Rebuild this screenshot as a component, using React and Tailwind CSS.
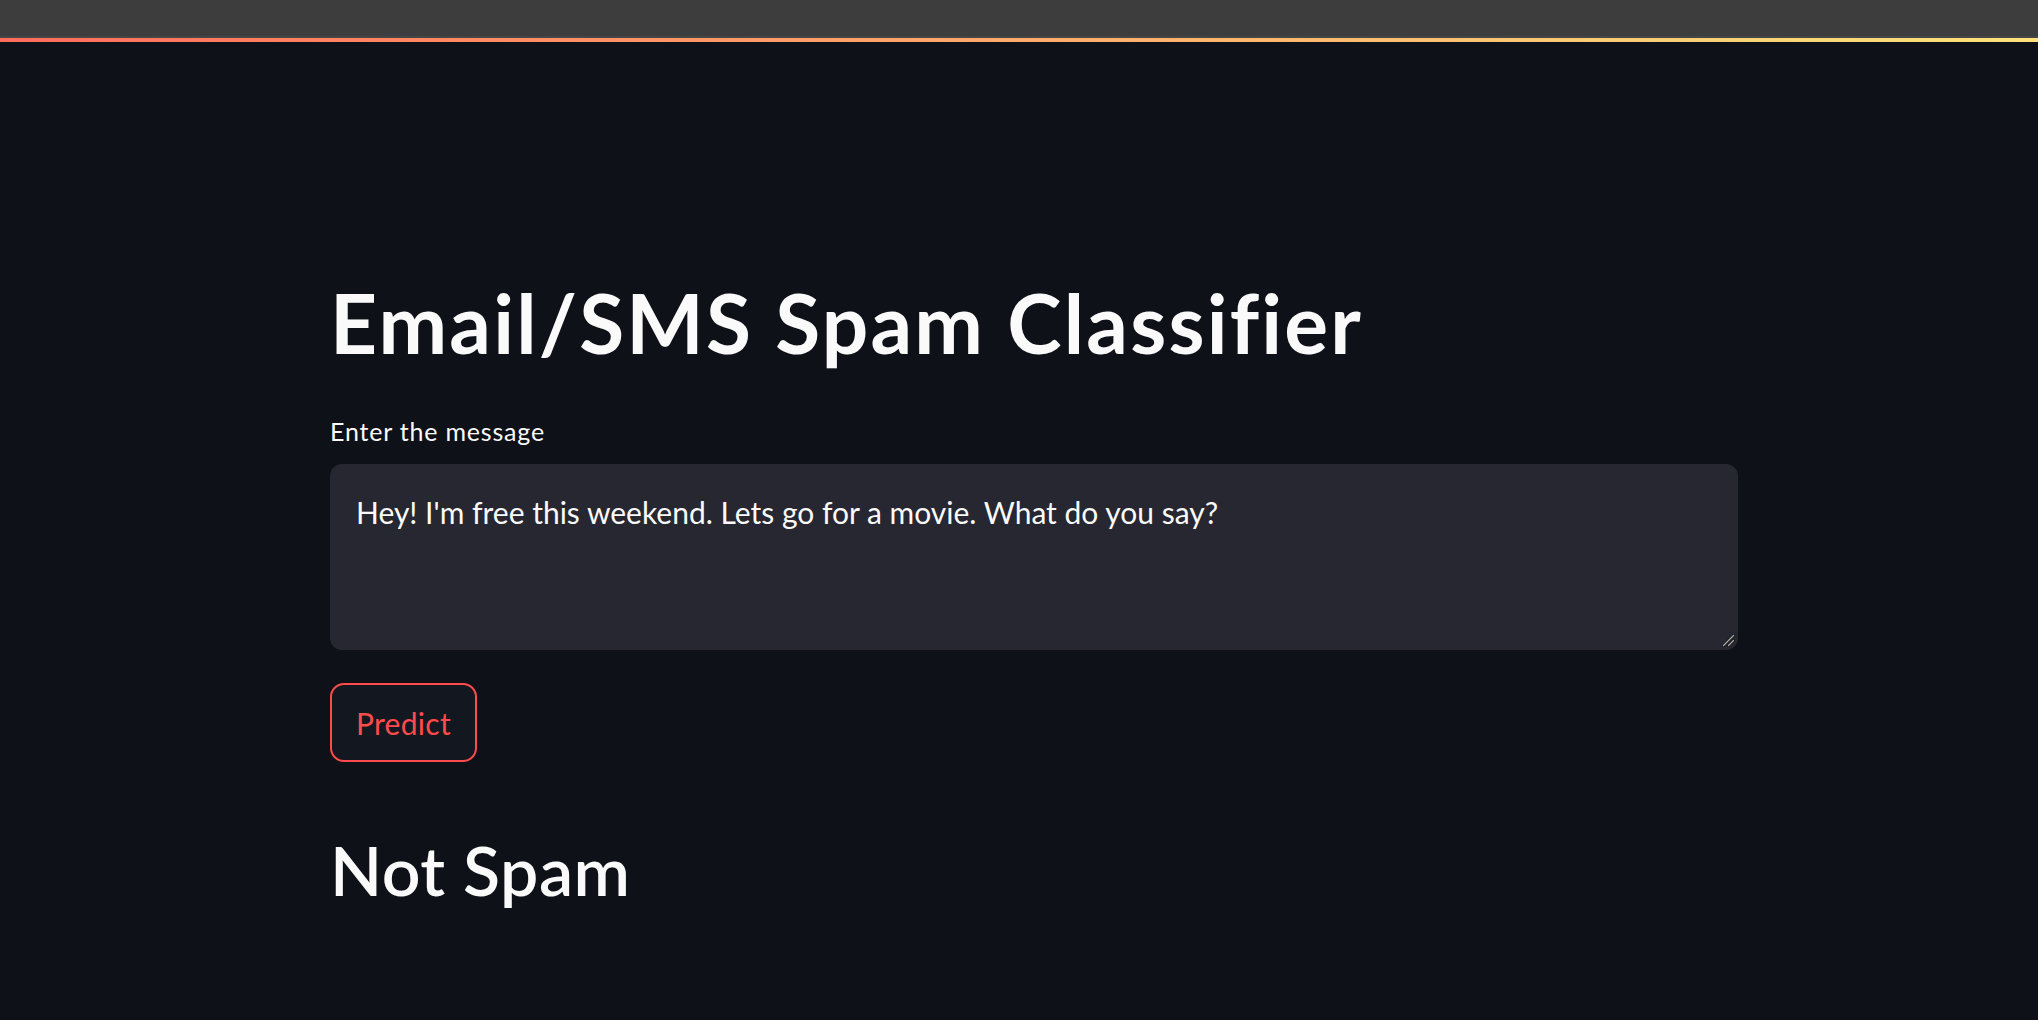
export default function App() {
  return (
    <div className="min-h-[1020px] w-full bg-[#0e1117] text-[#fafafa]" style={{ fontFamily: "Lato, 'Noto Sans', sans-serif" }}>
      <div className="h-[36px] bg-[#3d3d3d]" />
      <div className="h-[2px] bg-[#464646]" />
      <div className="h-[4px] bg-gradient-to-r from-[#ff6c5c] to-[#ffe27a]" />
      <div className="pl-[330px] pt-[239px]">
        <div className="w-[1408px] flex flex-col">
          <h1 className="text-[82px] leading-[82px] font-bold tracking-[2.2px]">Email/SMS Spam Classifier</h1>
          <label className="mt-[52px] text-[25px] leading-[32px] tracking-[0.8px]">Enter the message</label>
          <div className="relative mt-[17px] h-[186px] w-full">
            <textarea
              className="block h-full w-full rounded-[12px] bg-[#262730] pt-[28px] pl-[26px] pr-[26px] text-[30px] leading-[40px] text-[#fafafa] outline-none resize-none"
              defaultValue="Hey! I'm free this weekend. Lets go for a movie. What do you say?"
              style={{ fontFamily: "Lato, 'Noto Sans', sans-serif" }}
            />
            <svg className="pointer-events-none absolute right-[3px] bottom-[3px]" width="14" height="14" viewBox="0 0 14 14">
              <path d="M12.5 2.5 L2.5 12.5" stroke="#1a1a1a" strokeWidth="3" strokeLinecap="round" />
              <path d="M12.5 7.5 L7.5 12.5" stroke="#1a1a1a" strokeWidth="3" strokeLinecap="round" />
              <path d="M12.5 2.5 L2.5 12.5" stroke="#a9a9a9" strokeWidth="1.3" strokeLinecap="round" />
              <path d="M12.5 7.5 L7.5 12.5" stroke="#a9a9a9" strokeWidth="1.3" strokeLinecap="round" />
            </svg>
          </div>
          <div className="mt-[33px]">
            <button className="flex h-[79px] w-[147px] items-center justify-center rounded-[14px] border-2 border-[#ff4b4b] bg-[#13171f] text-[30px] leading-[36px] tracking-[0.3px] text-[#ff4b4b]">
              Predict
            </button>
          </div>
          <h2 className="mt-[74px] text-[68px] leading-[68px] font-semibold tracking-[0.5px]">Not Spam</h2>
        </div>
      </div>
    </div>
  );
}
